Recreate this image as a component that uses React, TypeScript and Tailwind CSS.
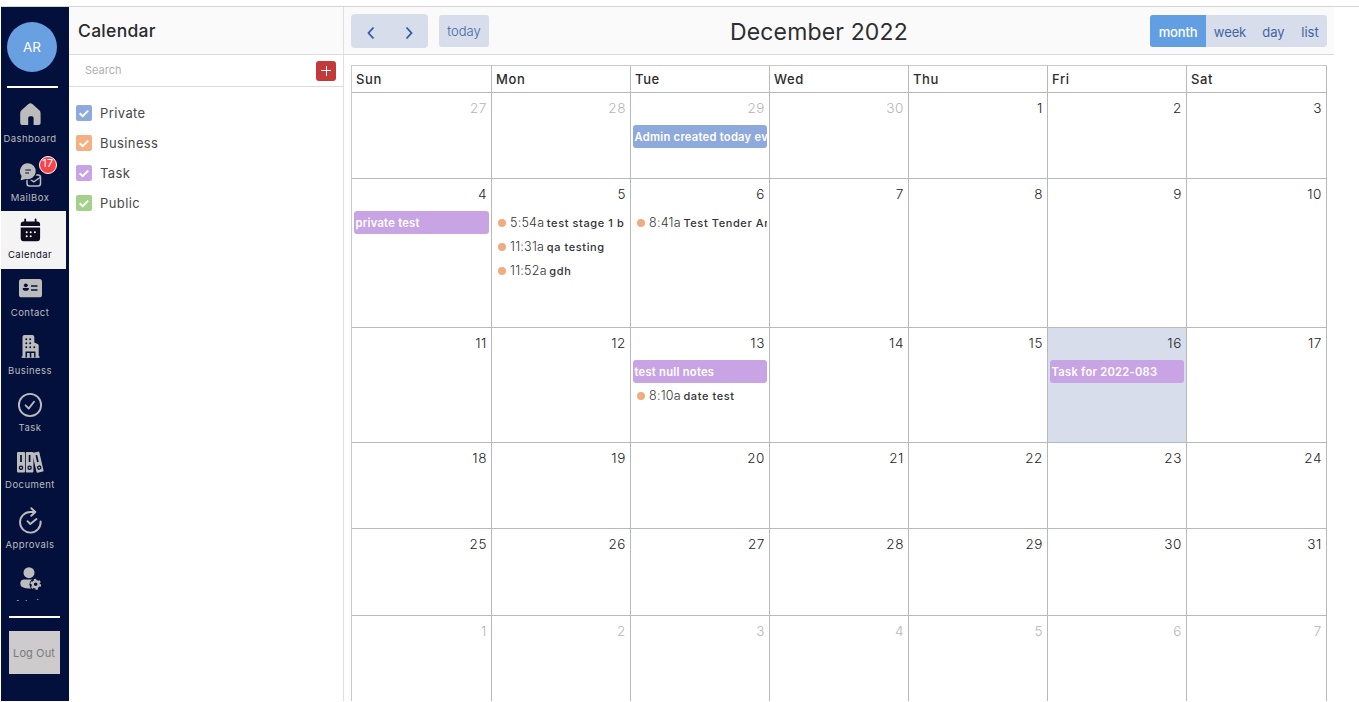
import React from 'react';

type NavItem = { label: string; height: string; icon: React.ReactNode; active?: boolean; badge?: string; labelClass?: string };

const BG = '#03103b';

const navItems: NavItem[] = [
  {
    label: 'Dashboard',
    height: 'h-[58px]',
    icon: (
      <path
        fill="currentColor"
        d="M4.2 18.2q0-1.9 1.3-3l6.9-6.1q2-1.6 4 0l6.9 6.1q1.3 1.1 1.3 3V28q0 2-2 2h-5v-7q0-1.7-1.6-1.7h-2.2q-1.6 0-1.6 1.7v7h-6q-2 0-2-2z"
      />
    ),
  },
  {
    label: 'MailBox',
    height: 'h-[58px]',
    badge: '17',
    labelClass: 'mt-px',
    icon: (
      <>
        <rect x="11" y="22" width="13.5" height="11" rx="2.5" fill="none" stroke="currentColor" strokeWidth="1.5" />
        <path d="M13 25.5l4.8 3.3 6.2-4.3" fill="none" stroke="currentColor" strokeWidth="1.4" />
        <circle cx="12" cy="18.3" r="9" fill={BG} />
        <path fill="currentColor" d="M12 10.3a8 8 0 1 1-2 15.8l-5.4 1.2 1-4.2A8 8 0 0 1 12 10.3z" />
        <path d="M9.3 17h5.6M9.3 20h3.7" stroke={BG} strokeWidth="1.2" />
      </>
    ),
  },
  {
    label: 'Calendar',
    height: 'h-[58px]',
    active: true,
    icon: (
      <>
        <path d="M9.2 8.3v3M19.6 8.3v3" stroke="currentColor" strokeWidth="1.8" strokeLinecap="round" />
        <path fill="currentColor" d="M4.7 15.1v-1.7q0-3 3-3h13.4q3 0 3 3v1.7zM4.7 16.5h19.4v10.7q0 3-3 3H7.7q-3 0-3-3z" />
        <g fill="#fff">
          <circle cx="10.7" cy="21.3" r="1" />
          <circle cx="14.7" cy="21.3" r="1" />
          <circle cx="18.9" cy="21.3" r="1" />
          <circle cx="10.7" cy="25.3" r="1" />
          <circle cx="14.7" cy="25.3" r="1" />
        </g>
      </>
    ),
  },
  {
    label: 'Contact',
    height: 'h-[57px]',
    icon: (
      <>
        <rect x="3" y="10" width="23" height="18.3" rx="2.6" fill="currentColor" />
        <circle cx="9.8" cy="16.3" r="1.9" fill={BG} />
        <path d="M6.8 19h6v.8q0 2-3 2t-3-2z" fill={BG} />
        <path d="M15 17h6.5M15 21h6.5" stroke={BG} strokeWidth="1.4" />
      </>
    ),
  },
  {
    label: 'Business',
    height: 'h-[58px]',
    labelClass: 'mt-px',
    icon: (
      <>
        <path fill="currentColor" d="M6.5 31.7V11q0-2 2-2h7.8q2 0 2 2v5.5l3.4 1.4q1 .5 1 1.6v12.2z" />
        <path d="M5.6 31h18" stroke="currentColor" strokeWidth="1.4" />
        <g fill={BG}>
          {[13.2, 17.2, 21.2].map((y) => (
            <React.Fragment key={y}>
              <circle cx="10.3" cy={y} r=".95" />
              <circle cx="14.2" cy={y} r=".95" />
            </React.Fragment>
          ))}
          <circle cx="18.3" cy="21.2" r=".95" />
          <path d="M9.5 25.5h10v6h-1.4v-4.4h-2.8v4.4h-1.5v-4.4H11v4.4H9.5z" />
        </g>
      </>
    ),
  },
  {
    label: 'Task',
    height: 'h-[57px]',
    icon: (
      <g fill="none" stroke="currentColor">
        <circle cx="14" cy="21" r="11.1" strokeWidth="1.9" />
        <path d="M9.6 21.3l3.1 3.3 5.3-6.8" strokeWidth="1.8" strokeLinecap="round" strokeLinejoin="round" />
      </g>
    ),
  },
  {
    label: 'Document',
    height: 'h-[58px]',
    icon: (
      <g>
        <rect x="1" y="11" width="8" height="20.5" rx="1" fill="currentColor" />
        <rect x="9.8" y="11" width="7.6" height="20.5" rx="1" fill="currentColor" />
        <path d="M5 14v7M13.6 14v7" stroke={BG} strokeWidth="1.7" />
        <circle cx="5" cy="26.8" r="1.6" fill="#bbb" stroke={BG} strokeWidth="1.3" />
        <circle cx="13.6" cy="26.8" r="1.6" fill="#bbb" stroke={BG} strokeWidth="1.3" />
        <g transform="rotate(-13 21.7 21)">
          <rect x="18.3" y="11" width="7.2" height="20.5" rx="1" fill="currentColor" />
          <path d="M21.9 14v7" stroke={BG} strokeWidth="1.7" />
          <circle cx="21.9" cy="26.8" r="1.6" fill="#bbb" stroke={BG} strokeWidth="1.3" />
        </g>
      </g>
    ),
  },
  {
    label: 'Approvals',
    height: 'h-[59px]',
    labelClass: 'mt-[2px]',
    icon: (
      <g fill="none" stroke="currentColor" strokeLinecap="round" strokeLinejoin="round">
        <path d="M24.6 22.5A10.3 10.3 0 1 1 14.3 13h4.5" strokeWidth="1.9" />
        <path d="M15.3 9.2l4 3.8-4 3.8" strokeWidth="1.9" />
        <path d="M11.5 22.2l2.8 2.8 6.2-5" strokeWidth="1.9" />
      </g>
    ),
  },
  {
    label: 'Admin',
    height: 'h-[43px]',
    labelClass: 'mt-[2px]',
    icon: (
      <>
        <circle cx="13" cy="14.7" r="5.5" fill="currentColor" />
        <path d="M4.3 25.5q0-4 4-4H18l-2 9h-4q-7.7-.3-7.7-5z" fill="currentColor" />
        <circle cx="19.7" cy="26.3" r="6.2" fill={BG} />
        <circle cx="19.7" cy="26.3" r="3" fill="none" stroke="currentColor" strokeWidth="2.4" />
        <circle cx="19.7" cy="26.3" r="4.6" fill="none" stroke="currentColor" strokeWidth="1.7" strokeDasharray="2.4 2.417" />
      </>
    ),
  },
];

function Sidebar() {
  return (
    <aside className="flex h-[694px] w-[68px] shrink-0 flex-col bg-[#03103b]">
      <div className="mt-[15px] ml-[6px] flex h-[50px] w-[50px] items-center justify-center rounded-full bg-[#68a0e2] text-[13.5px] text-white">
        AR
      </div>
      <div className="mt-[14px] ml-[6px] h-[2px] w-[51px] shrink-0 bg-white" />
      <nav className="mt-[7px] flex h-[506px] flex-col overflow-hidden">
        {navItems.map((item) => (
          <div
            key={item.label}
            className={`relative flex w-[65px] shrink-0 flex-col items-center pr-[7px] ${item.height} ${
              item.active ? 'bg-[#f4f4f4] text-[#0e0b1c]' : 'text-[#bcbcbd]'
            }`}
          >
            <svg viewBox="0 0 28 38" className="h-[38px] w-[28px] shrink-0 overflow-visible">
              {item.icon}
            </svg>
            <span className={`text-[9.5px] leading-[11px] tracking-[0.45px] whitespace-nowrap ${item.labelClass ?? ''}`}>
              {item.label}
            </span>
            {item.badge && (
              <span className="absolute top-[3px] left-[38px] flex h-[18px] w-[18px] items-center justify-center rounded-full border border-white bg-[#f8434b] pb-[3px] text-[11px] tracking-[0.5px] text-white">
                {item.badge}
              </span>
            )}
          </div>
        ))}
      </nav>
      <div className="mt-[15px] ml-[8px] h-[2px] w-[51px] shrink-0 bg-white" />
      <button className="mt-[13px] ml-[8px] h-[43px] w-[51px] shrink-0 bg-[#cdcbcc] pt-[2px] pr-px text-[11px] tracking-[0.1px] whitespace-nowrap text-[#7a7a7c]">
        Log Out
      </button>
    </aside>
  );
}

const filters = [
  { label: 'Private', color: 'bg-[#8ea9db]' },
  { label: 'Business', color: 'bg-[#f4b083]' },
  { label: 'Task', color: 'bg-[#c9a4e4]' },
  { label: 'Public', color: 'bg-[#a3d08b]' },
];

function FilterPanel() {
  return (
    <section className="h-[694px] w-[275px] shrink-0 border-r border-[#dfdfe1]">
      <h1 className="h-[48px] border-b border-[#dcdcde] bg-[#fafafa] pl-[9px] text-[17.5px] leading-[48px] font-medium tracking-[0.3px] text-[#2b2b2e]">
        Calendar
      </h1>
      <div className="flex h-[32px] items-center justify-between border-b border-[#dcdcde] pr-[7px] pl-[16px]">
        <span className="text-[11px] text-[#b0b0b0]">Search</span>
        <button className="flex h-[20px] w-[20px] items-center justify-center rounded-[3px] bg-[#c33a3a]">
          <svg viewBox="0 0 10 10" className="h-[10px] w-[10px]">
            <path d="M5.5 0v10M0 4.5h10" stroke="#fff" strokeWidth="1" />
          </svg>
        </button>
      </div>
      <ul className="pt-[11px] pl-[7px]">
        {filters.map((f) => (
          <li key={f.label} className="flex h-[30px] items-center gap-[8px] text-[13px] tracking-[0.4px] text-[#48484a]">
            <span className={`flex h-[16px] w-[16px] items-center justify-center rounded-[2px] ${f.color}`}>
              <svg viewBox="0 0 12 12" className="h-[12px] w-[12px]">
                <path d="M1.7 6.2l3 2.9 5.5-5.5" fill="none" stroke="#fff" strokeWidth="2" />
              </svg>
            </span>
            <span className="pt-[2px]">{f.label}</span>
          </li>
        ))}
      </ul>
    </section>
  );
}

function Toolbar() {
  return (
    <header className="flex h-[48px] w-[990px] border-b border-[#dcdcde] bg-[#fafafa] pr-[7px] pl-[7px] text-[#3f65a5]">
      <div className="mt-[7px] flex h-[34px] w-[77px] items-center justify-between rounded-[4px] bg-[#d7ddeb] pr-[14px] pl-[15px]">
        <svg viewBox="0 0 10 14" className="mt-[4px] h-[14px] w-[10px]">
          <path d="M7.5 1.5L2.5 7l5 5.500" fill="none" stroke="#2f5ba6" strokeWidth="1.8" />
        </svg>
        <svg viewBox="0 0 10 14" className="mt-[4px] h-[14px] w-[10px]">
          <path d="M2.5 1.5l5 5.5-5 5.5" fill="none" stroke="#2f5ba6" strokeWidth="1.8" />
        </svg>
      </div>
      <button className="mt-[8px] ml-[11px] h-[32px] w-[50px] rounded-[3px] bg-[#d7ddeb] pt-[2px] text-[13px] font-light">
        today
      </button>
      <h2 className="ml-[241px] w-[180px] text-[23px] leading-[51px] tracking-[0.15px] whitespace-nowrap text-[#2d2d30]">
        December 2022
      </h2>
      <div className="mt-[8px] ml-auto flex h-[32px] overflow-hidden rounded-[3px] bg-[#d7ddeb] text-[13px] leading-[35px]">
        <span className="w-[56px] bg-[#629ee2] text-center font-medium tracking-[-0.15px] text-white">month</span>
        <span className="w-[48px] text-center tracking-[-0.1px]">week</span>
        <span className="w-[39px] text-center">day</span>
        <span className="w-[34px] text-center">list</span>
      </div>
    </header>
  );
}

type CalEvent = { title: string; time?: string; color?: string };

const weekdays = ['Sun', 'Mon', 'Tue', 'Wed', 'Thu', 'Fri', 'Sat'];
const weeks = [
  { height: 'h-[86px]', days: [27, 28, 29, 30, 1, 2, 3] },
  { height: 'h-[149px]', days: [4, 5, 6, 7, 8, 9, 10] },
  { height: 'h-[115px]', days: [11, 12, 13, 14, 15, 16, 17] },
  { height: 'h-[86px]', days: [18, 19, 20, 21, 22, 23, 24] },
  { height: 'h-[87px]', days: [25, 26, 27, 28, 29, 30, 31] },
  { height: 'h-[86px]', days: [1, 2, 3, 4, 5, 6, 7] },
];

const events: Record<string, CalEvent[]> = {
  '0-2': [{ title: 'Admin created today event', color: 'bg-[#8ea9db]' }],
  '1-0': [{ title: 'private test', color: 'bg-[#c9a4e4]' }],
  '1-1': [
    { time: '5:54a', title: 'test stage 1 b' },
    { time: '11:31a', title: 'qa testing' },
    { time: '11:52a', title: 'gdh' },
  ],
  '1-2': [{ time: '8:41a', title: 'Test Tender Ar' }],
  '2-2': [
    { title: 'test null notes', color: 'bg-[#c9a4e4]' },
    { time: '8:10a', title: 'date test' },
  ],
  '2-5': [{ title: 'Task for 2022-083', color: 'bg-[#c9a4e4]' }],
};

function EventRow({ event }: { event: CalEvent }) {
  if (event.color) {
    return (
      <div
        className={`mr-[2px] mb-px ml-[2px] h-[23px] overflow-hidden rounded-[3px] pl-[1.5px] text-[11.2px] leading-[24px] font-semibold tracking-[0.25px] whitespace-nowrap text-white ${event.color}`}
      >
        {event.title}
      </div>
    );
  }
  return (
    <div className="mr-[2px] flex h-[24px] items-center overflow-hidden pl-[6px] whitespace-nowrap text-[#333336]">
      <span className="mr-[4px] h-[8px] w-[8px] shrink-0 rounded-full bg-[#f1ab80]" />
      <span className="mr-[2.5px] text-[12.5px] font-light tracking-[0.25px]">{event.time}</span>
      <span className="text-[11px] font-medium tracking-[0.6px]">{event.title}</span>
    </div>
  );
}

function MonthGrid() {
  return (
    <div className="mt-[10px] ml-[7px] flex w-[976px] flex-col border-t border-l border-[#c9c9cb]">
      <div className="flex h-[27px] border-b border-[#b9b9bc]">
        {weekdays.map((d, i) => (
          <div
            key={d}
            className={`border-r border-[#b9b9bc] pl-[4px] text-[13px] leading-[27px] font-medium tracking-[0.6px] text-[#2c2c2e] ${
              i === 0 || i === 6 ? 'w-[140px]' : 'w-[139px]'
            }`}
          >
            {d}
          </div>
        ))}
      </div>
      {weeks.map((week, w) => (
        <div key={w} className={`flex shrink-0 ${w < 5 ? 'border-b border-[#b9b9bc]' : ''} ${week.height}`}>
          {week.days.map((day, d) => {
            const muted = (w === 0 && d < 4) || w === 5;
            const today = w === 2 && d === 5;
            return (
              <div
                key={d}
                className={`overflow-hidden border-r border-[#b9b9bc] ${d === 0 || d === 6 ? 'w-[140px]' : 'w-[139px]'} ${
                  today ? 'bg-[#d7ddeb]' : ''
                }`}
              >
                <div
                  className={`h-[32px] pr-[4px] text-right text-[13.5px] leading-[30px] font-light tracking-[0.6px] ${
                    muted ? 'text-[#b5b5b7]' : 'text-[#232326]'
                  }`}
                >
                  {day}
                </div>
                {events[`${w}-${d}`]?.map((e) => (
                  <EventRow key={e.title} event={e} />
                ))}
              </div>
            );
          })}
        </div>
      ))}
    </div>
  );
}

export default function App() {
  return (
    <div className="h-[702px] w-[1359px] overflow-hidden bg-white pl-px font-['Inter','Liberation_Sans',sans-serif]">
      <div className="h-[7px] border-b border-[#d5d5d7]" />
      <div className="flex h-[694px] overflow-hidden">
        <Sidebar />
        <FilterPanel />
        <main className="min-w-0 flex-1">
          <Toolbar />
          <MonthGrid />
        </main>
      </div>
    </div>
  );
}
